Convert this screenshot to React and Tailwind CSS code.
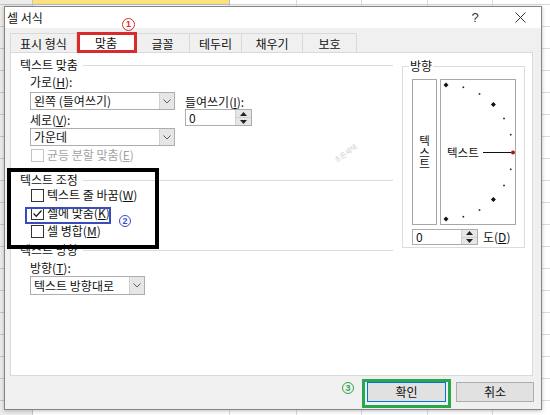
import React from "react";

function Chevron() {
  return (
    <svg width="8" height="5" viewBox="0 0 8 5">
      <path d="M0.5 0.5 L4 4 L7.5 0.5" fill="none" stroke="#606060" strokeWidth="1" />
    </svg>
  );
}

function Select({ text, w, h }) {
  return (
    <div className={`flex ${w} ${h} border border-[#adadad] bg-white`}>
      <div className="flex-1 pl-[3px] flex items-center text-[12px] leading-[14px] text-[#111]">{text}</div>
      <div className="w-[15px] border-l border-[#d0d0d0] bg-[#e6e6e6] flex items-center justify-center">
        <Chevron />
      </div>
    </div>
  );
}

function Spin() {
  return (
    <div className="flex flex-col w-[16px] h-full border-l border-[#d0d0d0] bg-[#e6e6e6]">
      <div className="flex-1 flex items-center justify-center border-b border-[#d0d0d0]">
        <svg width="7" height="4" viewBox="0 0 7 4"><path d="M0 4 L3.5 0 L7 4Z" fill="#222" /></svg>
      </div>
      <div className="flex-1 flex items-center justify-center">
        <svg width="7" height="4" viewBox="0 0 7 4"><path d="M0 0 L7 0 L3.5 4Z" fill="#222" /></svg>
      </div>
    </div>
  );
}

function Check({ checked, disabled, children }) {
  return (
    <div className="flex items-center h-[18px] ml-[11px]">
      <div
        className={`w-[13px] h-[13px] border ${disabled ? "border-[#c4c4c4]" : "border-[#333333]"} bg-white flex items-center justify-center`}
      >
        {checked && (
          <svg width="11" height="11" viewBox="0 0 11 11">
            <path d="M1.5 5.5 L4.3 8.3 L9.5 2.5" fill="none" stroke="#222" strokeWidth="1.3" />
          </svg>
        )}
      </div>
      <span className={`ml-[3px] text-[12px] leading-[14px] ${disabled ? "text-[#a3a3a3]" : "text-[#111]"}`}>{children}</span>
    </div>
  );
}

function GroupHeader({ children, className }) {
  return (
    <div className={`flex items-center h-[14px] ${className}`}>
      <span className="text-[12px] leading-[14px] text-[#111]">{children}</span>
      <div className="flex-1 h-px bg-[#dcdcdc] ml-[5px]" />
    </div>
  );
}

function Label({ children, className }) {
  return <div className={`h-[14px] text-[12px] leading-[14px] text-[#111] ${className}`}>{children}</div>;
}

const U = ({ children }) => <span className="underline underline-offset-[1px]">{children}</span>;

function Circle({ n, className }) {
  return (
    <div
      className={`absolute z-20 rounded-full border-[1.5px] flex items-center justify-center text-[9px] font-bold leading-none font-['Liberation_Sans',sans-serif] ${className}`}
    >
      {n}
    </div>
  );
}

function ArcDots() {
  const els = [];
  for (let a = 90; a >= -90; a -= 15) {
    const r = (a * Math.PI) / 180;
    const x = 5 + 67 * Math.cos(r);
    const y = 72 - 67 * Math.sin(r);
    if (a === 0) continue;
    if (a % 45 === 0) {
      els.push(
        <path key={a} d={`M${x - 2.5} ${y} L${x} ${y - 2.5} L${x + 2.5} ${y} L${x} ${y + 2.5}Z`} fill="#111" />
      );
    } else {
      els.push(<rect key={a} x={x - 0.8} y={y - 0.8} width="1.6" height="1.6" fill="#222" />);
    }
  }
  return (
    <svg width="74" height="144" viewBox="0 0 74 144" className="block">
      {els}
      <line x1="42" y1="72.5" x2="70" y2="72.5" stroke="#111" strokeWidth="1" />
      <circle cx="72" cy="72.5" r="2" fill="#a01818" />
    </svg>
  );
}

const colW = [33, 197, 67, 65, 66, 65, 65, 65];

export default function App() {
  const rows = Array.from({ length: 20 });
  return (
    <div className="relative w-[550px] h-[415px] overflow-hidden bg-white font-['Noto_Sans_CJK_KR','Noto_Sans',sans-serif]">
      {/* spreadsheet background */}
      <div className="grid grid-cols-[33px_197px_67px_65px_66px_65px_65px_65px] grid-rows-[5px_repeat(19,22px)]">
        {rows.map((_, ri) =>
          colW.map((_, ci) => (
            <div
              key={`${ri}-${ci}`}
              className={`border-r border-b ${
                ci === 0
                  ? "bg-[#ececec] border-[#c6c6c6]"
                  : ri === 0 && ci === 1
                  ? "bg-[#fbe47c] border-[#bdbdbd]"
                  : "bg-white border-[#dadada]"
              }`}
            />
          ))
        )}
      </div>

      {/* dialog window */}
      <div className="absolute left-[4px] top-[6px] w-[538px] h-[404px] border border-[#858585] bg-[#f0f0f0] flex flex-col shadow-[0_1px_4px_rgba(0,0,0,0.25)]">
        {/* title bar */}
        <div className="h-[21px] bg-white flex items-center pl-[2px]">
          <span className="text-[12px] leading-[14px] text-[#111]">셀 서식</span>
          <span className="ml-auto w-[12px] text-center text-[13px] leading-[14px] text-[#333] font-['Liberation_Sans',sans-serif]">?</span>
          <div className="w-[11px] h-[11px] ml-[34px] mr-[15px]">
            <svg width="11" height="11" viewBox="0 0 11 11">
              <path d="M0.5 0.5 L10.5 10.5 M10.5 0.5 L0.5 10.5" stroke="#333" strokeWidth="1" />
            </svg>
          </div>
        </div>

        {/* tabs */}
        <div className="flex pl-[5px] mt-[4px] items-end h-[21px]">
          <div className="w-[67px] h-[20px] border border-b-0 border-[#d9d9d9] flex items-center justify-center text-[12px] text-[#111]">표시 형식</div>
          <div className="w-[60px] h-[21px] -ml-px bg-white border border-b-0 border-[#d9d9d9] flex items-center justify-center text-[12px] text-[#111] relative">맞춤</div>
          <div className="w-[55px] h-[20px] -ml-px border border-b-0 border-[#d9d9d9] flex items-center justify-center text-[12px] text-[#111]">글꼴</div>
          <div className="w-[53px] h-[20px] -ml-px border border-b-0 border-[#d9d9d9] flex items-center justify-center text-[12px] text-[#111]">테두리</div>
          <div className="w-[62px] h-[20px] -ml-px border border-b-0 border-[#d9d9d9] flex items-center justify-center text-[12px] text-[#111]">채우기</div>
          <div className="w-[55px] h-[20px] -ml-px border border-b-0 border-[#d9d9d9] flex items-center justify-center text-[12px] text-[#111]">보호</div>
        </div>

        {/* panel */}
        <div className="ml-[5px] -mt-px w-[523px] h-[324px] border border-[#d9d9d9] bg-white flex">
          {/* left column */}
          <div className="w-[382px] pl-[9px] pt-[5px] flex flex-col">
            <GroupHeader>텍스트 맞춤</GroupHeader>
            <Label className="ml-[10px] mt-[3px]">
              가로(<U>H</U>):
            </Label>
            <div className="flex ml-[10px]">
              <div className="flex flex-col w-[145px]">
                <div className="mt-[3px]">
                  <Select text="왼쪽 (들여쓰기)" w="w-[145px]" h="h-[18px]" />
                </div>
                <Label className="mt-[3px]">
                  세로(<U>V</U>):
                </Label>
                <div className="mt-[1px]">
                  <Select text="가운데" w="w-[145px]" h="h-[18px]" />
                </div>
              </div>
              <div className="flex flex-col ml-[10px] -mt-[14px]">
                <Label className="mt-[20px]">
                  들여쓰기(<U>I</U>):
                </Label>
                <div className="flex w-[67px] h-[17px] border border-[#adadad] bg-white">
                  <div className="flex-1 pl-[3px] text-[12px] leading-[15px] text-[#111]">0</div>
                  <Spin />
                </div>
              </div>
            </div>
            <div className="mt-[2px] h-[14px] flex items-center">
              <Check disabled>
                균등 분할 맞춤(<U>E</U>)
              </Check>
            </div>

            <GroupHeader className="mt-[11px]">텍스트 조정</GroupHeader>
            <div className="-mt-px">
              <Check>
                텍스트 줄 바꿈(<U>W</U>)
              </Check>
              <Check checked>
                셀에 맞춤(<U>K</U>)
              </Check>
              <Check>
                셀 병합(<U>M</U>)
              </Check>
            </div>

            <GroupHeader className="mt-[3px]">텍스트 방향</GroupHeader>
            <Label className="ml-[10px] mt-[4px]">
              방향(<U>T</U>):
            </Label>
            <div className="ml-[10px] mt-[1px]">
              <Select text="텍스트 방향대로" w="w-[115px]" h="h-[19px]" />
            </div>
          </div>

          {/* orientation group */}
          <div className="ml-[9px] mt-[13px] w-[123px] h-[182px] border border-[#dcdcdc] flex flex-col">
            <div className="-mt-[8px] ml-[6px] w-fit px-[1px] bg-white h-[14px] text-[12px] leading-[14px] text-[#111]">방향</div>
            <div className="flex ml-[9px] mt-[6px] gap-[3px]">
              <div className="w-[25px] h-[146px] border border-[#a8a8a8] flex items-center justify-center">
                <span className="[writing-mode:vertical-rl] text-[11.5px] leading-[14px] text-[#111]">텍스트</span>
              </div>
              <div className="relative w-[76px] h-[146px] border border-[#a8a8a8]">
                <ArcDots />
                <span className="absolute left-[6px] top-[65px] text-[11.5px] leading-[14px] text-[#111]">텍스트</span>
              </div>
            </div>
            <div className="flex items-center ml-[9px] mt-[4px]">
              <div className="flex w-[66px] h-[16px] border border-[#adadad] bg-white">
                <div className="flex-1 pl-[3px] text-[12px] leading-[14px] text-[#111]">0</div>
                <Spin />
              </div>
              <span className="ml-[5px] text-[12px] leading-[14px] text-[#111]">
                도(<U>D</U>)
              </span>
            </div>
          </div>
        </div>

        {/* footer */}
        <div className="flex justify-end gap-[10px] pr-[7px] mt-[6px]">
          <div className="w-[79px] h-[20px] border border-[#0078d7] bg-[#e1e1e1] flex items-center justify-center text-[12px] text-[#111]">확인</div>
          <div className="w-[78px] h-[20px] border border-[#adadad] bg-[#e1e1e1] flex items-center justify-center text-[12px] text-[#111]">취소</div>
        </div>
      </div>

      {/* watermark */}
      <span className="absolute left-[333px] top-[150px] rotate-[-35deg] text-[7px] leading-none text-[#cfcfcf]">초은세택</span>

      {/* annotations */}
      <div className="absolute z-20 left-[77px] top-[32px] w-[60px] h-[21px] border-[3px] border-[#d92b2b]" />
      <Circle n="1" className="left-[122px] top-[18px] w-[13px] h-[13px] border-[#d92b2b] text-[#d92b2b]" />

      <div className="absolute z-20 left-[7px] top-[168px] w-[152px] h-[81px] border-4 border-black" />
      <div className="absolute z-20 left-[25px] top-[207px] w-[86px] h-[17px] border-2 border-[#3a4bbd]" />
      <Circle n="2" className="left-[119px] top-[215px] w-[12px] h-[12px] border-[#3a4bcc] text-[#3a4bcc]" />

      <div className="absolute z-20 left-[362px] top-[379px] w-[89px] h-[29px] border-[3px] border-[#2aa64b]" />
      <Circle n="3" className="left-[342px] top-[382px] w-[12px] h-[12px] border-[#2aa64b] text-[#2aa64b]" />
    </div>
  );
}
